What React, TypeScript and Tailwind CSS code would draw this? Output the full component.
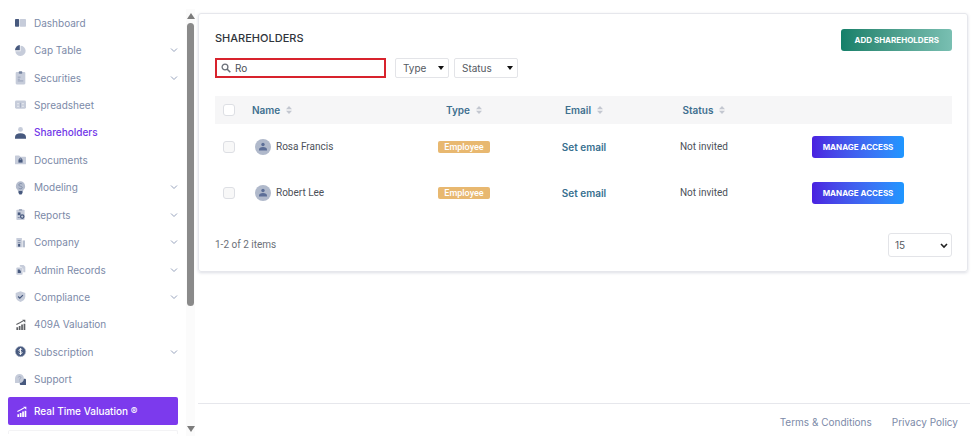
import { useState } from 'react';
import type { ReactNode } from 'react';

const DARK = '#47597e';
const LIGHT = '#c6ccda';

const icons: Record<string, ReactNode> = {
  dashboard: (
    <>
      <rect x="0" y="3" width="6" height="11" rx="1" fill={DARK} />
      <rect x="7" y="3" width="9" height="11" rx="1" fill={LIGHT} />
    </>
  ),
  capTable: (
    <>
      <path d="M8 1a7.500 7.500 0 1 1-7.500 8H8z" fill={LIGHT} />
      <path d="M7 0v7.500H0A7.500 7.500 0 0 1 7 0z" fill={DARK} />
    </>
  ),
  securities: (
    <>
      <rect x="1" y="0" width="14" height="18" rx="1.500" fill={LIGHT} />
      <rect x="5.500" y="-1" width="5" height="3.500" rx="1" fill="#7583a0" />
      <path d="M4 7.500h4M4 10.500h3M4 13h8" stroke="#8e99b1" strokeWidth="1.200" />
    </>
  ),
  spreadsheet: (
    <>
      <rect x="0" y="2" width="16" height="12" rx="2" fill={LIGHT} />
      <path d="M3 7h3M3 10.500h3M10 7h3M10 10.500h3" stroke="#e9ebf1" strokeWidth="1.500" />
      <path d="M8 5.500v7" stroke="#a3adc1" strokeWidth="1.200" />
    </>
  ),
  shareholders: (
    <>
      <circle cx="8" cy="3.500" r="3.500" fill={LIGHT} />
      <path d="M0 17v-2C0 11 3 9 8 9s8 2 8 6v2z" fill={DARK} />
    </>
  ),
  documents: (
    <>
      <path d="M0 3a1 1 0 0 1 1-1h5l2 2h7a1 1 0 0 1 1 1v9a1 1 0 0 1-1 1H1a1 1 0 0 1-1-1z" fill={LIGHT} />
      <rect x="5" y="8" width="6" height="4.500" fill={DARK} />
      <path d="M6.500 8.500V7.500a1.500 1.500 0 0 1 3 0v1" stroke={DARK} strokeWidth="1.300" fill="none" />
    </>
  ),
  modeling: (
    <>
      <path d="M8-1a7 7 0 0 1 4 12.500V13H4v-1.500A7 7 0 0 1 8-1z" fill="#b4bccd" />
      <path d="M10.500 3C9 1.500 5.500 2 5.500 4.300c0 2.500 5 1.400 5 3.700C10.500 10 7 10.500 5.300 8.800" stroke="#7c89a5" strokeWidth="1.200" fill="none" />
      <path d="M5 13h6v2.500L9.500 18h-3L5 15.500z" fill={DARK} />
    </>
  ),
  reports: (
    <>
      <rect x="2" y="1" width="12" height="15" rx="1" fill={LIGHT} />
      <rect x="5.500" y="0" width="5" height="3" rx="1" fill="#a5aec2" />
      <rect x="4" y="5" width="4" height="4" fill={DARK} />
      <circle cx="10.500" cy="11" r="2.500" fill="none" stroke={DARK} strokeWidth="1.800" />
      <path d="M4 12.500h3" stroke="#7c89a5" strokeWidth="1.500" />
    </>
  ),
  company: (
    <>
      <path d="M2 1.500h8V15H2z" fill={LIGHT} />
      <path d="M11 5h3.500v10H11z" fill="#b4bccd" />
      <path d="M4 5h4M4 8h4" stroke="#8e99b1" strokeWidth="1.600" />
      <rect x="4.500" y="10" width="3" height="4" fill={DARK} />
    </>
  ),
  adminRecords: (
    <>
      <path d="M7 1.500h5.500L15 4v8h-3V7L9 4H7z" fill={LIGHT} />
      <rect x="2" y="5" width="9" height="10.500" rx="1" fill={LIGHT} />
      <path d="M4 8h2.500l2 2v3H4z" fill={DARK} />
    </>
  ),
  compliance: (
    <>
      <path d="M8 0.500l7 2.500v5c0 4-3 6.500-7 8-4-1.500-7-4-7-8V3z" fill={LIGHT} />
      <path d="M4.500 8l2.500 2.500 4.500-4.500" stroke={DARK} strokeWidth="1.800" fill="none" />
    </>
  ),
  valuation: (
    <>
      <path d="M2 12h2.500v4H2zM5.500 10H8v6H5.500zM9 8h2.500v8H9zM12.500 7H15v9h-2.500z" fill="currentColor" />
      <path d="M2 8l5-2.500L13 2" stroke="currentColor" strokeWidth="1.500" fill="none" />
      <path d="M10.500 1H15v4.500z" fill="currentColor" />
    </>
  ),
  subscription: (
    <>
      <circle cx="8" cy="8" r="7.500" fill={DARK} stroke="#aeb6c8" />
      <path d="M10.500 5.500C9.500 4 5.700 4.300 5.700 6.300c0 2.300 4.700 1.200 4.700 3.500 0 2-4 2.200-5 .4M8 3v10" stroke="#fff" strokeWidth="1.300" fill="none" />
    </>
  ),
  support: (
    <>
      <path d="M10 7h4.500A1.500 1.500 0 0 1 16 8.500V16H8.500A1.500 1.500 0 0 1 7 14.500V11z" fill={DARK} />
      <path d="M6.500 0A6.500 6.500 0 0 1 13 6.500 6.300 6.300 0 0 1 6.500 13H0V6.500A6.500 6.500 0 0 1 6.500 0z" fill={LIGHT} />
      <path d="M4.800 5c.2-2 3.700-2 3.700.2 0 1.300-1.800 1.300-1.800 3M6.700 9.500v1.300" stroke="#98a3b9" strokeWidth="1.200" fill="none" />
    </>
  ),
};

const menu = [
  { label: 'Dashboard', icon: 'dashboard' },
  { label: 'Cap Table', icon: 'capTable', children: true },
  { label: 'Securities', icon: 'securities', children: true },
  { label: 'Spreadsheet', icon: 'spreadsheet' },
  { label: 'Shareholders', icon: 'shareholders', active: true },
  { label: 'Documents', icon: 'documents' },
  { label: 'Modeling', icon: 'modeling', children: true },
  { label: 'Reports', icon: 'reports', children: true },
  { label: 'Company', icon: 'company', children: true },
  { label: 'Admin Records', icon: 'adminRecords', children: true },
  { label: 'Compliance', icon: 'compliance', children: true },
  { label: '409A Valuation', icon: 'valuation' },
  { label: 'Subscription', icon: 'subscription', children: true },
  { label: 'Support', icon: 'support' },
];

const people = ['Rosa Francis', 'Robert Lee'];

function MenuIcon ({ name, className }: { name: string; className?: string })
{
  return (
    <svg viewBox="0 0 16 16" aria-hidden="true" className={`h-[11px] w-[11px] shrink-0 overflow-visible ${className ?? ''}`}>
      {icons[name]}
    </svg>
  );
}

function Sidebar ()
{
  return (
    <aside className="flex w-[186px] shrink-0 flex-col pt-[9px]">
      <nav className="flex flex-1 flex-col">
        {menu.map((item) => (
          <a
            key={item.label}
            href="#"
            className={`flex flex-1 items-center pr-2 pl-[15px] ${item.active ? 'font-medium text-[#7137e8]' : 'text-[#7c8aa8]'}`}
          >
            <MenuIcon name={item.icon} className="text-[#5e6064]" />
            <span className="ml-2 flex-1">{item.label}</span>
            {item.children && (
              <svg viewBox="0 0 8 8" aria-hidden="true" className="h-2 w-2">
                <path d="M1 2.500l3 3 3-3" fill="none" stroke="#97a3bd" strokeWidth="1" />
              </svg>
            )}
          </a>
        ))}
      </nav>
      <button className="mt-1 mr-2 ml-2 flex h-7 items-center rounded-xs bg-[#7c3aed] pl-2 font-medium text-white">
        <MenuIcon name="valuation" />
        <span className="ml-[7px]">Real Time Valuation ®</span>
      </button>
      <div className="mt-[5px] mr-2 mb-[10px] ml-2 h-1 rounded-t-xs border border-b-0 border-[#f3f3f5]"></div>
    </aside>
  );
}

function ScrollTrack ()
{
  return (
    <div className="mt-[9px] mb-[8px] flex w-[9px] shrink-0 flex-col items-center bg-[#fbfbfb] py-1">
      <svg viewBox="0 0 8 6" aria-hidden="true" className="h-[6px] w-2">
        <path d="M4 0l4 6H0z" fill="#7c7c7c" />
      </svg>
      <div className="mt-1 mb-[5px] flex w-[7px] flex-1 flex-col">
        <div className="h-[71%] rounded-full bg-[#8a8a8a]"></div>
      </div>
      <svg viewBox="0 0 8 6" aria-hidden="true" className="h-[6px] w-2">
        <path d="M4 6l4-6H0z" fill="#7c7c7c" />
      </svg>
    </div>
  );
}

function Filter ({ label, className }: { label: string; className: string })
{
  return (
    <div className={`relative h-5 ${className}`}>
      <select aria-label={label} className="h-full w-full appearance-none rounded-xs border border-[#e3e4e8] bg-white pl-[7px] text-[#555a62] outline-none">
        <option>{label}</option>
      </select>
      <svg viewBox="0 0 6 4" aria-hidden="true" className="pointer-events-none absolute top-2 right-[5px] h-1 w-[6px]">
        <path d="M0 0h6L3 4z" fill="#111" />
      </svg>
    </div>
  );
}

function SortLabel ({ children }: { children: ReactNode })
{
  return (
    <button className="inline-flex items-center gap-[6px] font-semibold">
      {children}
      <svg viewBox="0 0 6 8" aria-hidden="true" className="h-2 w-[6px]">
        <path d="M3 0l3 3.200H0zM3 8l3-3.200H0z" fill="#c3c7d0" />
      </svg>
    </button>
  );
}

function Checkbox ({ label, className }: { label: string; className: string })
{
  return (
    <input
      type="checkbox"
      aria-label={label}
      className={`block h-3 w-3 appearance-none rounded-[3px] border border-[#dddfe4] ${className}`}
    />
  );
}

function Avatar ()
{
  return (
    <svg viewBox="0 0 16 16" aria-hidden="true" className="h-4 w-4 shrink-0">
      <circle cx="8" cy="8" r="8" fill="#b0b9cb" />
      <circle cx="8" cy="5.500" r="1.700" fill="#5c6e97" />
      <path d="M4 11.500V10.500C4 9 5.500 8 8 8s4 1 4 2.500v1z" fill="#5c6e97" />
    </svg>
  );
}

export default function App ()
{
  const [query, setQuery] = useState('Ro');

  return (
    <div className="flex min-h-screen bg-white font-[Inter,sans-serif] text-[10px] leading-4">
      <Sidebar />
      <ScrollTrack />

      <main className="flex min-w-0 flex-1 flex-col pt-[13px] pl-[3px]">
        <section className="mr-[6px] rounded-[3px] border border-[#e6e7ec] pr-[15px] pb-[14px] pl-4 shadow-[0_1px_3px_rgba(60,70,110,0.18)]">
          <div className="flex items-start justify-between">
            <div className="pt-4">
              <h1 className="text-[11px] font-medium text-[#30343b]">SHAREHOLDERS</h1>
              <div className="mt-3 flex">
                <label className="mr-[9px] flex h-5 w-[171px] items-center border-2 border-[#d8232d] pl-1">
                  <svg viewBox="0 0 10 10" aria-hidden="true" className="h-[10px] w-[10px] shrink-0">
                    <circle cx="4" cy="4" r="2.900" fill="none" stroke="#6a6f78" strokeWidth="1.300" />
                    <path d="M6 6l3.300 3.300" stroke="#6a6f78" strokeWidth="1.600" />
                  </svg>
                  <input
                    aria-label="Search shareholders"
                    value={query}
                    onChange={(e) => setQuery(e.target.value)}
                    className="ml-1 min-w-0 flex-1 bg-transparent text-[#4c5159] outline-none"
                  />
                </label>
                <Filter label="Type" className="mr-[5px] w-[54px]" />
                <Filter label="Status" className="w-16" />
              </div>
            </div>
            <button className="mt-[15px] h-[22px] rounded-[3px] bg-linear-to-r from-[#13806a] to-[#79bfb2] px-[13px] text-[8px] font-bold text-white">
              ADD SHAREHOLDERS
            </button>
          </div>

          <table className="mt-[18px] w-full table-fixed">
            <thead>
              <tr className="h-7 bg-[#f6f6f7] text-[#3f708f]">
                <th className="w-[29px] pl-2"><Checkbox label="Select all" className="bg-white" /></th>
                <th className="pl-2 text-left"><SortLabel>Name</SortLabel></th>
                <th className="w-[120px]"><SortLabel>Type</SortLabel></th>
                <th className="w-[120px]"><SortLabel>Email</SortLabel></th>
                <th className="w-[120px]"><SortLabel>Status</SortLabel></th>
                <th className="w-[188px]"></th>
              </tr>
            </thead>
            <tbody className="font-[Roboto,sans-serif]">
              {people.map((name) => (
                <tr key={name} className="h-[46px] text-center text-[#4c5159]">
                  <td className="pl-2"><Checkbox label={`Select ${name}`} className="bg-[#f8f8f8]" /></td>
                  <td className="pl-[11px]">
                    <div className="flex items-center gap-[5px]">
                      <Avatar />
                      <span>{name}</span>
                    </div>
                  </td>
                  <td>
                    <span className="inline-block h-3 rounded-[2px] bg-[#e8b870] px-[6px] text-[9px] leading-3 font-medium text-white">Employee</span>
                  </td>
                  <td><a href="#" className="font-[Inter,sans-serif] font-semibold text-[#38708f]">Set email</a></td>
                  <td>Not invited</td>
                  <td>
                    <button className="h-[22px] rounded-[3px] bg-linear-to-r from-[#4a1fe0] to-[#1e96ff] px-[11px] font-[Inter,sans-serif] text-[8px] font-bold text-white">
                      MANAGE ACCESS
                    </button>
                  </td>
                </tr>
              ))}
            </tbody>
          </table>

          <div className="mt-[17px] flex items-center justify-between text-[#6b7078]">
            <span className="font-[Roboto,sans-serif]">1-2 of 2 items</span>
            <div className="relative h-6 w-16">
              <select aria-label="Items per page" className="h-full w-full appearance-none rounded-[3px] border border-[#e3e4e8] bg-white pl-[6px] text-[#555a62] outline-none">
                <option>15</option>
              </select>
              <svg viewBox="0 0 8 6" aria-hidden="true" className="pointer-events-none absolute top-[10px] right-1 h-[6px] w-2">
                <path d="M1 1l3 3 3-3" fill="none" stroke="#222" strokeWidth="1.600" />
              </svg>
            </div>
          </div>
        </section>

        <footer className="mt-auto mr-1 flex h-[41px] justify-end gap-5 border-t border-[#e6e7ec] pt-[10px] pr-3 text-[#7c8aa8]">
          <a href="#">Terms &amp; Conditions</a>
          <a href="#">Privacy Policy</a>
        </footer>
      </main>
    </div>
  );
}
